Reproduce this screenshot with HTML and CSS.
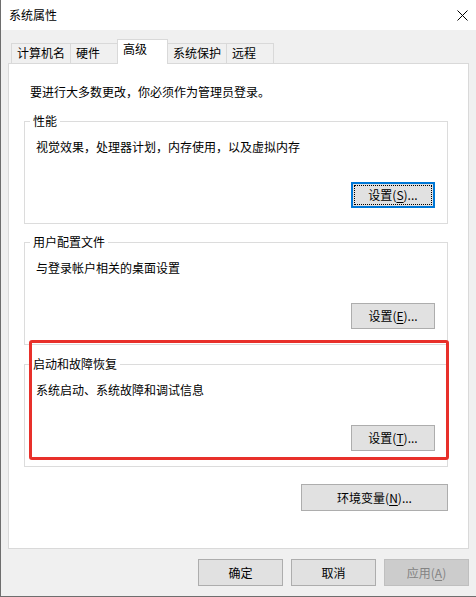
FILE: index.html
```html
<!DOCTYPE html>
<html>
	<head>
		<meta charset="UTF-8">
		<title>系统属性</title>
		<link rel="stylesheet" href="styles.css">
	</head>

	<body>
		<div class='window'>
			<div class='titlebar'>
				<span class='title'>系统属性</span>
				<svg class='close' width='11' height='11' viewBox='0 0 11 11'>
					<path d='M0.5 0.5 L10.5 10.5 M10.5 0.5 L0.5 10.5' stroke='#000' stroke-width='1' fill='none'/>
				</svg>
			</div>

			<div class='client'>
				<div class='tabs'>
					<span class='tab'>计算机名</span>
					<span class='tab'>硬件</span>
					<span class='tab selected'>高级</span>
					<span class='tab'>系统保护</span>
					<span class='tab last'>远程</span>
				</div>

				<div class='panel'>
					<p class='intro'>要进行大多数更改，你必须作为管理员登录。</p>

					<fieldset class='group'>
						<legend>性能</legend>
						<p class='desc'>视觉效果，处理器计划，内存使用，以及虚拟内存</p>
						<div class='row'><button class='focused'>设置(<u>S</u>)...</button></div>
					</fieldset>

					<fieldset class='group'>
						<legend>用户配置文件</legend>
						<p class='desc'>与登录帐户相关的桌面设置</p>
						<div class='row'><button>设置(<u>E</u>)...</button></div>
					</fieldset>

					<fieldset class='group'>
						<legend>启动和故障恢复</legend>
						<p class='desc'>系统启动、系统故障和调试信息</p>
						<div class='row'><button>设置(<u>T</u>)...</button></div>
					</fieldset>

					<div class='env'><button class='wide'>环境变量(<u>N</u>)...</button></div>

					<div class='callout'></div>
				</div>

				<div class='footer'>
					<button class='tall'>确定</button>
					<button class='tall'>取消</button>
					<button class='tall' disabled>应用(<u>A</u>)</button>
				</div>
			</div>
		</div>
	</body>
</html>
```

FILE: styles.css
```css
html, body {
	margin: 0;
	padding: 0;
	background-color: #f0f0f0;
}

body {
	font-family: "Noto Sans CJK SC", "Liberation Sans", sans-serif;
	font-size: 12px;
	color: #000;
}

.window {
	width: 476px;
	height: 597px;
	box-sizing: border-box;
	border-left: 1px solid #6e6e6e;
	border-bottom: 1px solid #6e6e6e;
	background-color: #f0f0f0;
}

.titlebar {
	height: 30px;
	background-color: #fff;
	display: flex;
	align-items: center;
	justify-content: space-between;
	padding: 0 8px;
}

.title {
	line-height: 16px;
}

.client {
	padding: 9px 7px 11px 7px;
}

/* tab strip */
.tabs {
	display: flex;
	align-items: flex-end;
	height: 24px;
	padding-left: 3px;
}

.tab {
	box-sizing: border-box;
	height: 20px;
	min-width: 48px;
	padding: 0 5px;
	line-height: 17px;
	border: 1px solid #d9d9d9;
	border-right: none;
	border-bottom: none;
	white-space: nowrap;
}
.tab.last { border-right: 1px solid #d9d9d9 }

.tab.selected {
	height: 25px;
	min-width: 51px;
	margin: 0 -1px -1px -1px;
	line-height: 18px;
	border-right: 1px solid #d9d9d9;
	background-color: #fff;
	position: relative;
	z-index: 1;
}

.panel {
	position: relative;
	background-color: #fff;
	border: 1px solid #d9d9d9;
	padding: 20px 20px 37px 15px;
}

.intro {
	margin: 0 0 13px 6px;
	line-height: 16px;
}

/* group boxes */
fieldset.group {
	margin: 0 0 10px 0;
	padding: 0 12px 15px 0;
	border: 1px solid #dcdcdc;
	min-width: 0;
}
fieldset.group + fieldset.group { margin-top: 0 }
fieldset.group:nth-of-type(2) { margin-bottom: 11px }
fieldset.group:nth-of-type(3) { margin-bottom: 17px }

fieldset.group legend {
	margin-left: 5px;
	padding: 0 3px;
	line-height: 16px;
}

.desc {
	margin: 10px 0 0 11px;
	line-height: 16px;
}

.row {
	display: flex;
	justify-content: flex-end;
	margin-top: 27px;
}

.env {
	display: flex;
	justify-content: flex-end;
}

/* buttons */
button {
	font-family: inherit;
	font-size: 12px;
	color: #000;
	background-color: #e1e1e1;
	border: 1px solid #adadad;
	border-radius: 0;
	width: 84px;
	height: 26px;
	padding: 0;
	line-height: 16px;
	outline: none;
}
button u { text-underline-offset: 2px }

button.focused {
	border: 1px solid #0078d7;
	box-shadow: inset 0 0 0 1px #0078d7;
	outline: 1px dotted #000;
	outline-offset: -4px;
}

button.wide {
	width: 147px;
	height: 27px;
}

button.tall {
	width: 85px;
	height: 27px;
}

button:disabled {
	background-color: #cccccc;
	border-color: #bfbfbf;
	color: #838383;
}

.footer {
	display: flex;
	justify-content: flex-end;
	gap: 8px;
	margin-top: 10px;
}

/* red annotation box drawn over the third group */
.callout {
	position: absolute;
	left: 20px;
	top: 276px;
	width: 420px;
	height: 120px;
	box-sizing: border-box;
	border: 3px solid #e8302a;
	border-radius: 3px;
	pointer-events: none;
}
```
